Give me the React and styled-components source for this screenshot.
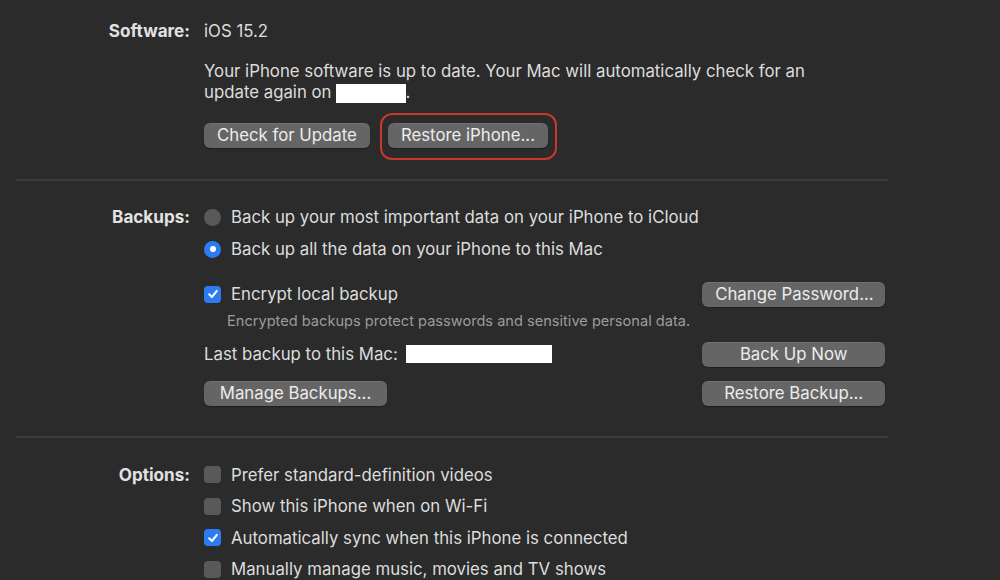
import React from "react";
import styled, { createGlobalStyle } from "styled-components";

const GlobalStyle = createGlobalStyle`
  html, body {
    margin: 0;
    background: #2b2b2b;
  }
  body {
    font-family: Inter, "Noto Sans", sans-serif;
    color: #dddddd;
    -webkit-font-smoothing: antialiased;
  }
`;

const Page = styled.div`
  width: 872px;
  margin-left: 16px;
  height: 580px;
  overflow: hidden;
`;

const Section = styled.section`
  display: grid;
  grid-template-columns: 174px 1fr;
  column-gap: 14px;
  padding: ${(p) => p.$pad};

  & + & {
    border-top: 2px solid #3d3d3d;
  }
`;

const Label = styled.div`
  font-weight: 700;
  font-size: 17.1px;
  text-align: right;
  color: #e2e2e2;
  line-height: ${(p) => p.$h}px;
`;

const Content = styled.div`
  display: flex;
  flex-direction: column;
  align-items: flex-start;
`;

const Line = styled.div`
  font-size: 16.8px;
  line-height: 22px;
`;

const Paragraph = styled.p`
  margin: 19px 0 0;
  font-size: 16.8px;
  line-height: 21px;
`;

const Redacted = styled.span`
  display: inline-block;
  vertical-align: middle;
  width: ${(p) => p.$w}px;
  height: ${(p) => p.$hgt}px;
  background: #ffffff;
  margin-left: ${(p) => p.$ml || 0}px;
`;

const ButtonRow = styled.div`
  display: flex;
  gap: 18px;
  margin-top: 20px;
`;

const Button = styled.button`
  position: relative;
  height: 25px;
  width: ${(p) => (p.$wide ? "183px" : "auto")};
  padding: 0 13px;
  border: none;
  border-radius: 6px;
  background: #656565;
  box-shadow: inset 0 1px 0 rgba(255, 255, 255, 0.08), 0 1px 1px rgba(0, 0, 0, 0.3);
  color: #ececec;
  font-family: inherit;
  font-size: 16.8px;
  line-height: 25px;
  text-align: center;
  white-space: nowrap;

  ${(p) =>
    p.$highlight &&
    `
    &::after {
      content: "";
      position: absolute;
      inset: -10px -9px -12px -8px;
      border: 2px solid #c8392b;
      border-radius: 12px;
      pointer-events: none;
    }
  `}
`;

const OptionRow = styled.div`
  display: flex;
  align-items: center;
  gap: 10px;
  height: ${(p) => p.$h}px;
  font-size: 16.8px;
  white-space: nowrap;
`;

const RadioDot = styled.span`
  width: 17px;
  height: 17px;
  border-radius: 50%;
  flex: none;
  box-sizing: border-box;
  background: ${(p) => (p.$on ? "#2b7cf3" : "#595959")};
  display: flex;
  align-items: center;
  justify-content: center;

  &::after {
    content: "";
    width: 6px;
    height: 6px;
    border-radius: 50%;
    background: #ffffff;
    display: ${(p) => (p.$on ? "block" : "none")};
  }
`;

const Box = styled.span`
  width: 17px;
  height: 17px;
  border-radius: 4px;
  flex: none;
  background: ${(p) => (p.$on ? "#2b7cf3" : "#595959")};
  display: flex;
  align-items: center;
  justify-content: center;
`;

const BackupGrid = styled.div`
  display: grid;
  width: calc(100% - 3px);
  margin-top: 16px;
  grid-template-columns: 1fr 183px;
  grid-template-rows: 26px 28px 38px 40px;
  align-items: center;
  column-gap: 12px;
`;

const Hint = styled.div`
  grid-column: 1 / 2;
  padding-left: 23px;
  font-size: 14.6px;
  color: #9c9c9c;
  white-space: nowrap;
`;

const Inline = styled.div`
  display: flex;
  align-items: center;
  font-size: 16.8px;
  gap: 8px;
`;

function Radio({ on, children }) {
  return (
    <OptionRow $h={32}>
      <RadioDot $on={on} />
      {children}
    </OptionRow>
  );
}

function Check({ on, h = 26, children }) {
  return (
    <OptionRow $h={h}>
      <Box $on={on}>
        {on && (
          <svg width="12" height="12" viewBox="0 0 12 12">
            <path
              d="M2.2 6.3 L4.9 9 L9.9 2.8"
              fill="none"
              stroke="#fff"
              strokeWidth="2"
              strokeLinecap="round"
              strokeLinejoin="round"
            />
          </svg>
        )}
      </Box>
      {children}
    </OptionRow>
  );
}

export default function App() {
  return (
    <>
      <GlobalStyle />
      <Page>
        <Section $pad="20px 0 31px">
          <Label $h={22}>Software:</Label>
          <Content>
            <Line>iOS 15.2</Line>
            <Paragraph>
              Your iPhone software is up to date. Your Mac will automatically check for an
              <br />
              update again on
              <Redacted $w={70} $hgt={19} $ml={4} />.
            </Paragraph>
            <ButtonRow>
              <Button>Check for Update</Button>
              <Button $highlight>Restore iPhone...</Button>
            </ButtonRow>
          </Content>
        </Section>

        <Section $pad="20px 0 23px">
          <Label $h={32}>Backups:</Label>
          <Content>
            <Radio>Back up your most important data on your iPhone to iCloud</Radio>
            <Radio on>Back up all the data on your iPhone to this Mac</Radio>
            <BackupGrid>
              <Check on>Encrypt local backup</Check>
              <Button $wide>Change Password...</Button>
              <Hint>Encrypted backups protect passwords and sensitive personal data.</Hint>
              <div />
              <Inline>
                Last backup to this Mac:
                <Redacted $w={146} $hgt={18} />
              </Inline>
              <Button $wide>Back Up Now</Button>
              <div>
                <Button $wide>Manage Backups...</Button>
              </div>
              <Button $wide>Restore Backup...</Button>
            </BackupGrid>
          </Content>
        </Section>

        <Section $pad="21px 0 0">
          <Label $h={31.5}>Options:</Label>
          <Content>
            <Check h={31.5}>Prefer standard-definition videos</Check>
            <Check h={31.5}>Show this iPhone when on Wi-Fi</Check>
            <Check h={31.5} on>
              Automatically sync when this iPhone is connected
            </Check>
            <Check h={31.5}>Manually manage music, movies and TV shows</Check>
          </Content>
        </Section>
      </Page>
    </>
  );
}
